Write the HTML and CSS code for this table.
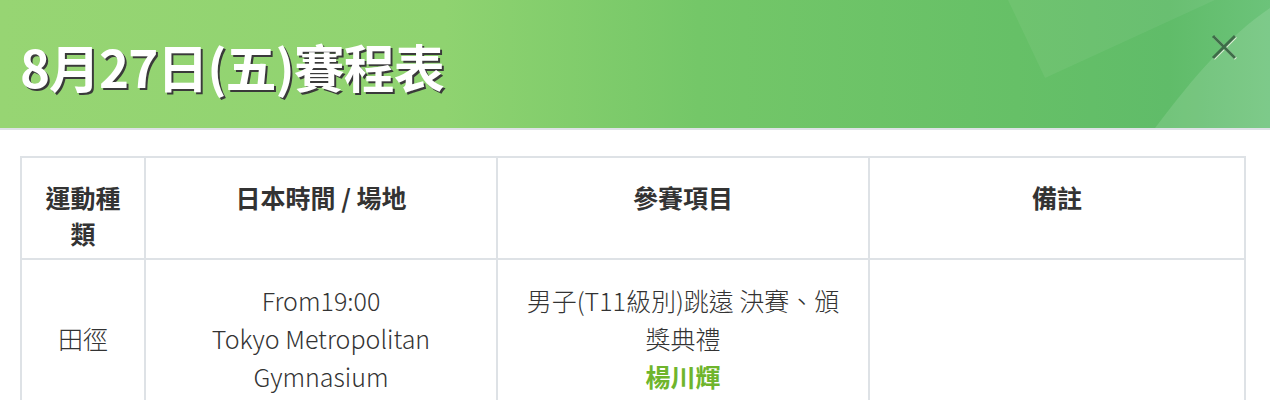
FILE: index.html
```html
<!DOCTYPE html>
<html lang="zh-Hant">
<head>
  <meta charset="UTF-8">
  <title>8月27日(五)賽程表</title>
  <link rel="stylesheet" href="styles.css">
</head>
<body>

  <div class="modal-header">
    <svg class="header-deco" width="1270" height="128" viewBox="0 0 1270 128" preserveAspectRatio="none">
      <polygon points="1008,0 1215,0 1045,78" fill="rgba(255,255,255,0.06)"/>
      <path d="M1155,128 C1195,75 1230,35 1270,8 L1270,128 Z" fill="rgba(255,255,255,0.12)"/>
    </svg>
    <h1 class="modal-title">8月27日(五)賽程表</h1>
    <button class="close-btn" aria-label="close">
      <svg width="28" height="28" viewBox="0 0 28 28">
        <path d="M3 3 L25 25 M25 3 L3 25" stroke="#dff0d8" stroke-width="3" transform="translate(0.8,0.8)"/>
        <path d="M3 3 L25 25 M25 3 L3 25" stroke="#3e6d48" stroke-width="3"/>
      </svg>
    </button>
  </div>

  <div class="modal-body">
    <table class="schedule">
      <colgroup>
        <col class="col-sport">
        <col class="col-time">
        <col class="col-event">
        <col class="col-note">
      </colgroup>
      <thead>
        <tr>
          <th>運動種類</th>
          <th>日本時間 / 場地</th>
          <th>參賽項目</th>
          <th>備註</th>
        </tr>
      </thead>
      <tbody>
        <tr>
          <td>田徑</td>
          <td>From19:00<br>Tokyo Metropolitan<br>Gymnasium</td>
          <td>男子(T11級別)跳遠 決賽、頒<br>獎典禮<span class="athlete">楊川輝</span></td>
          <td></td>
        </tr>
      </tbody>
    </table>
  </div>

</body>
</html>
```

FILE: styles.css
```css
body {
  margin: 0;
  font-family: "Noto Sans CJK TC", "Noto Sans", sans-serif;
  color: #333;
  background: #fff;
}

.modal-header {
  position: relative;
  height: 128px;
  border-bottom: 2px solid #dee2e6;
  background: linear-gradient(90deg, #97d573 0%, #8fd370 35%, #74c768 55%, #66c067 80%, #60bc69 92%, #6cc37a 100%);
  display: flex;
  align-items: flex-start;
  justify-content: space-between;
  padding: 0 20px;
  overflow: hidden;
}

.header-deco {
  position: absolute;
  left: 0;
  top: 0;
}

.modal-title {
  position: relative;
  margin: 28px 0 0;
  font-size: 51px;
  line-height: 76px;
  font-weight: 700;
  color: #fff;
  letter-spacing: -1px;
  text-shadow: 2px 2px 0 #3a3a3a;
}

.close-btn {
  position: relative;
  background: none;
  border: none;
  padding: 0;
  margin: 33px 12px 0 0;
  width: 28px;
  height: 28px;
  cursor: pointer;
}

.close-btn svg {
  display: block;
}

.modal-body {
  padding: 26px 26px 0 20px;
}

.schedule {
  width: 1224px;
  border-collapse: collapse;
  border: 2px solid #dee2e6;
  table-layout: fixed;
}

.col-sport { width: 124px; }
.col-time { width: 352px; }
.col-event { width: 372px; }
.col-note { width: 376px; }

.schedule th,
.schedule td {
  border: 2px solid #dee2e6;
  text-align: center;
  font-size: 25px;
  color: #333;
}

.schedule th {
  font-weight: 700;
  line-height: 36px;
  vertical-align: top;
  padding: 21px 20px 7px;
}

.schedule td {
  font-family: "Noto Sans CJK TC Light", "Noto Sans CJK TC DemiLight", "Noto Sans CJK TC", sans-serif;
  font-weight: 300;
  line-height: 38px;
  vertical-align: middle;
  padding: 21px 10px;
}

.athlete {
  display: block;
  font-family: "Noto Sans CJK TC", sans-serif;
  color: #6fb52c;
  font-weight: 700;
}
```
